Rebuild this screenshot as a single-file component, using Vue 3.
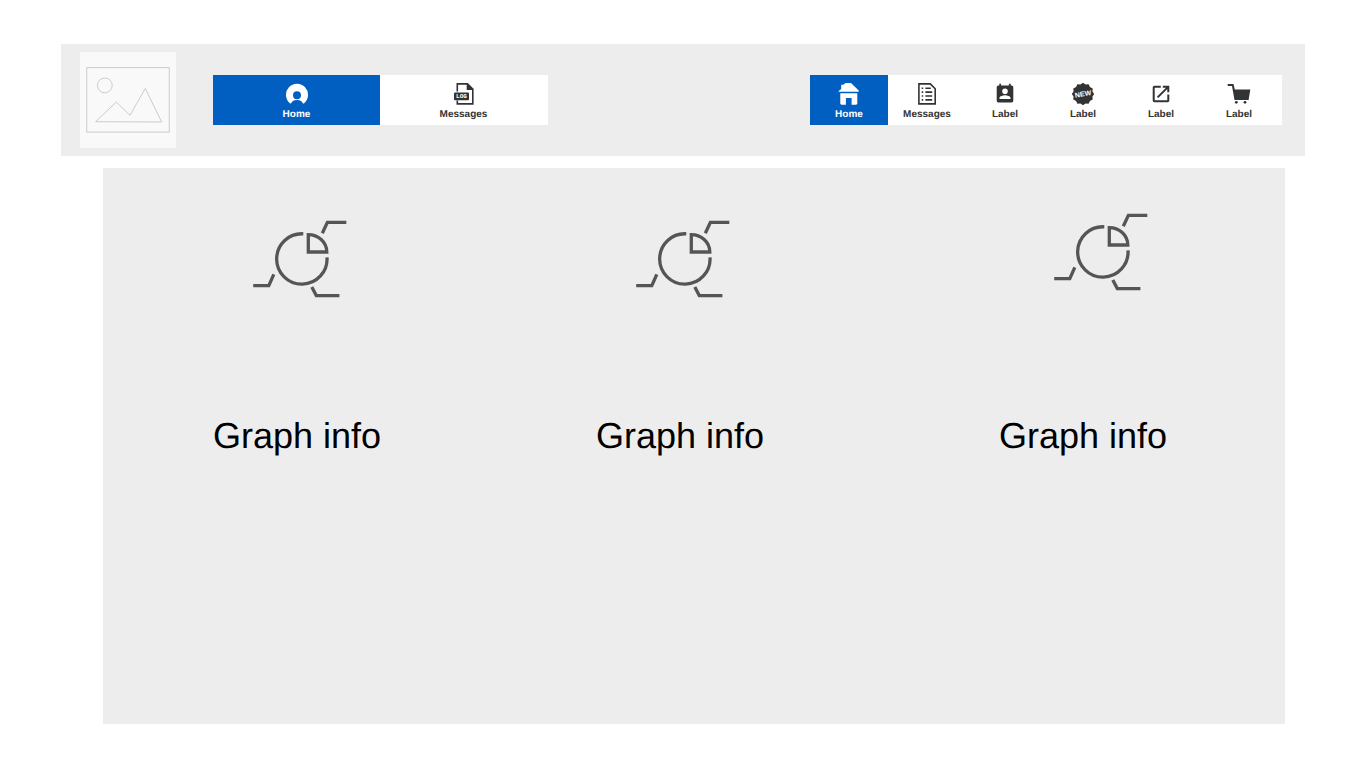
<script setup>
const primary = [
  { label: 'Home', icon: 'user', active: true },
  { label: 'Messages', icon: 'log' },
]
const secondary = [
  { label: 'Home', icon: 'house', active: true },
  { label: 'Messages', icon: 'list' },
  { label: 'Label', icon: 'contact' },
  { label: 'Label', icon: 'new' },
  { label: 'Label', icon: 'external' },
  { label: 'Label', icon: 'cart' },
]
const navs = [
  { name: 'primary', items: primary },
  { name: 'secondary', items: secondary },
]
const graphs = ['Graph info', 'Graph info', 'Graph info']

const badge = Array.from({ length: 24 }, (_, i) => {
  const r = i % 2 ? 9.8 : 11.2
  const a = (i * Math.PI) / 12
  return `${(12 + r * Math.sin(a)).toFixed(2)},${(12 - r * Math.cos(a)).toFixed(2)}`
}).join(' ')
</script>

<template>
  <div class="page">
    <header class="header">
      <svg class="logo" viewBox="0 0 96 96" role="img" aria-label="Logo">
        <rect x="6.8" y="15.6" width="82.4" height="64.5" />
        <circle cx="24.8" cy="33.4" r="7.4" />
        <path d="M15.5 69.7L36.3 50L50 63.3L65.3 36.5L81.7 70Z" />
      </svg>

      <nav v-for="nav in navs" :key="nav.name" class="nav" :class="nav.name" :aria-label="nav.name">
        <a v-for="(item, i) in nav.items" :key="i" href="#" class="item" :class="{ active: item.active }">
          <svg class="icon" viewBox="0 0 24 24" aria-hidden="true">
            <g v-if="item.icon === 'user'">
              <path fill-rule="evenodd" d="M6 21.4H5.2A11 11 0 1 1 18.8 21.4H18C17.2 19.4 15.4 18.4 14.2 18.2Q12 17.9 9.8 18.2C8.6 18.4 6.8 19.4 6 21.4ZM12 9.2A4 4 0 1 0 12 17.2A4 4 0 1 0 12 9.2Z" />
            </g>
            <g v-else-if="item.icon === 'log'">
              <path class="line" d="M5.3 9.5V1.9H15.5L20.8 7.2V21.9H5.3V18.5" />
              <path d="M14.7 1.2L21.6 8.1H14.7Z" />
              <rect x="2" y="10.4" width="15" height="7.8" rx="1" />
              <text class="log" x="9.5" y="16.4">LOG</text>
            </g>
            <g v-else-if="item.icon === 'house'">
              <path d="M1.7 9.8V9L4.2 7V2.8H6.4L8.6 1H14L21.7 8.4V9.8Z" />
              <path d="M3.3 11.2H20.3V21.8L19.3 22.8H14.6V16H8.9V22.8H4.3L3.3 21.8Z" />
            </g>
            <g v-else-if="item.icon === 'list'">
              <path class="line" d="M3.9 1.9H15.3L20.2 6.8V21.9H3.9Z" />
              <path class="line" d="M10.4 6.2H15.8M10.4 10.1H17.2M10.4 14H17.2M10.4 17.9H17.2M6.7 6.2H8.2M6.7 10.1H8.2M6.7 14H8.2M6.7 17.9H8.2" />
            </g>
            <g v-else-if="item.icon === 'contact'">
              <path fill-rule="evenodd" d="M6.3 1.8H8.1V3.5H15.9V1.8H17.7V3.5H18.6Q20.3 3.5 20.3 5.2V18.7Q20.3 20.4 18.6 20.4H5.4Q3.7 20.4 3.7 18.7V5.2Q3.7 3.5 5.4 3.5H6.3ZM12 6.4A2.8 2.8 0 1 0 12 12A2.8 2.8 0 1 0 12 6.4ZM6.5 17H17.5V16C17.5 14.2 14 13.3 12 13.3S6.5 14.2 6.5 16Z" />
            </g>
            <g v-else-if="item.icon === 'new'">
              <polygon :points="badge" />
              <text class="new" x="12" y="14.4" transform="rotate(-9 12 12)">NEW</text>
            </g>
            <g v-else-if="item.icon === 'external'">
              <path class="bold" d="M11.8 4.7H5.4Q4.7 4.7 4.7 5.4V18.6Q4.7 19.3 5.4 19.3H18.6Q19.3 19.3 19.3 18.6V12.4" />
              <path class="bold" d="M13.8 4.7H19.3V10.2M18.9 5.1L8.6 15.4" />
            </g>
            <g v-else>
              <path d="M0.7 2H6.5L7.8 7.6H23.3L21.6 18H7.5L5 3.9H0.7Z" />
              <circle cx="9.3" cy="20.3" r="1.4" />
              <circle cx="18" cy="20.3" r="1.4" />
            </g>
          </svg>
          <span>{{ item.label }}</span>
        </a>
      </nav>
    </header>

    <main class="graphs">
      <section v-for="(title, i) in graphs" :key="i" class="graph">
        <svg class="pie" viewBox="0 0 120 105" aria-hidden="true">
          <path d="M63.3 28.8A25.2 25.2 0 1 0 87 52.3" />
          <path d="M68.3 47V29.6C78 29.6 86.8 37 86.8 47Z" />
          <path d="M82.3 28.3L87.4 17.3H106.3" />
          <path d="M13.2 80.6H28.8L33.8 69.4" />
          <path d="M71.8 82L76.3 90.6H99.4" />
        </svg>
        <h2>{{ title }}</h2>
      </section>
    </main>
  </div>
</template>

<style>
body {
  margin: 0;
  background: #fff;
}
</style>

<style scoped>
.page {
  padding: 44px 61px 36px;
  font-family: "Liberation Sans", Arial, sans-serif;
  text-rendering: geometricPrecision;
}
.header {
  display: flex;
  align-items: center;
  padding: 8px 23px 8px 19px;
  background: #ededed;
}
.logo {
  flex: none;
  width: 96px;
  height: 96px;
  margin-right: 37px;
  background: #f9f9f9;
  fill: none;
  stroke: #cccccc;
  stroke-width: 1;
}
.nav {
  display: flex;
  background: #fff;
}
.primary {
  flex: 0 1 334px;
  padding-right: 1px;
}
.secondary {
  flex: 0 1 468px;
  margin-left: auto;
  padding-right: 4px;
}
.item {
  flex: 1;
  display: flex;
  flex-direction: column;
  align-items: center;
  padding: 7px 0 1px;
  color: #333;
  font-size: 10px;
  font-weight: bold;
  line-height: 18px;
  text-decoration: none;
}
.item.active {
  background: #005fc1;
  color: #fff;
}
.icon {
  width: 24px;
  height: 24px;
  fill: currentColor;
}
.line,
.bold {
  fill: none;
  stroke: currentColor;
  stroke-width: 1.6;
}
.bold {
  stroke-width: 2;
}
.log,
.new {
  fill: #fff;
  font-size: 7px;
  text-anchor: middle;
}
.log {
  font-size: 6px;
  font-family: "Liberation Mono", monospace;
}
.graphs {
  display: grid;
  grid-template-columns: 376fr 402fr 404fr;
  min-height: 556px;
  margin: 12px 20px 0 42px;
  background: #ededed;
}
.graph {
  display: flex;
  flex-direction: column;
  align-items: center;
  padding-top: 37px;
}
.graph:first-child {
  padding-left: 12px;
}
.pie {
  width: 120px;
  height: 105px;
  margin: 0 0 105px 6px;
  fill: none;
  stroke: #555;
  stroke-width: 3.3;
}
.graph:last-child {
  padding-top: 30px;
}
.graph:last-child .pie {
  margin: 0 0 112px 36px;
}
h2 {
  margin: 0;
  font-size: 36px;
  font-weight: normal;
  line-height: 42px;
  color: #000;
}
</style>
